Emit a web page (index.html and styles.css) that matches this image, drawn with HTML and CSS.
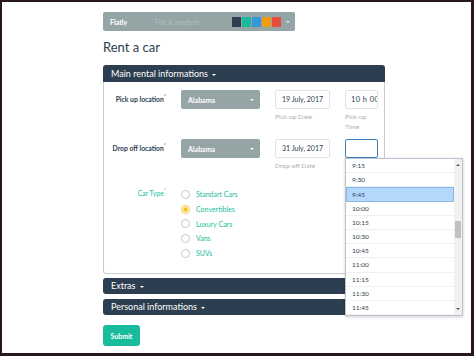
FILE: index.html
```html
<!DOCTYPE html>
<html lang="en">
<head>
    <meta charset="UTF-8">
    <meta name="viewport" content="width=device-width, initial-scale=1.0">
    <title>Rent a car</title>
    <link rel="stylesheet" href="styles.css">
</head>
<body>
    <div class="frame">
        <div class="container">
            <div class="theme-bar">
                <span class="theme-name">Flatly</span>
                <span class="theme-desc">Flat &amp; modern</span>
                <div class="swatches">
                    <span class="swatch sw-navy"></span>
                    <span class="swatch sw-green"></span>
                    <span class="swatch sw-blue"></span>
                    <span class="swatch sw-orange"></span>
                    <span class="swatch sw-red"></span>
                </div>
                <span class="caret caret-light"></span>
            </div>

            <h1 class="page-title">Rent a car</h1>

            <div class="panel">
                <div class="panel-heading">Main rental informations <span class="caret"></span></div>
                <div class="panel-body">
                    <div class="form-row">
                        <label class="row-label">Pick up location<sup>*</sup></label>
                        <div class="select">Alabama <span class="caret"></span></div>
                        <div class="field field-date">
                            <div class="input">19 July, 2017</div>
                            <div class="help">Pick-up Date</div>
                        </div>
                        <div class="field field-time">
                            <div class="input input-time">10 h 00</div>
                            <div class="help">Pick-up<br>Time</div>
                        </div>
                    </div>

                    <div class="form-row">
                        <label class="row-label">Drop off location<sup>*</sup></label>
                        <div class="select">Alabama <span class="caret"></span></div>
                        <div class="field field-date">
                            <div class="input">31 July, 2017</div>
                            <div class="help">Drop-off Date</div>
                        </div>
                        <div class="field field-time">
                            <div class="input input-time focused"></div>
                        </div>
                    </div>

                    <div class="form-row row-radios">
                        <label class="row-label label-green">Car Type<sup>*</sup></label>
                        <div class="radios">
                            <label class="radio"><span class="dot"></span>Standart Cars</label>
                            <label class="radio checked"><span class="dot"></span>Convertibles</label>
                            <label class="radio"><span class="dot"></span>Luxury Cars</label>
                            <label class="radio"><span class="dot"></span>Vans</label>
                            <label class="radio"><span class="dot"></span>SUVs</label>
                        </div>
                    </div>
                </div>
            </div>

            <div class="panel-heading closed">Extras <span class="caret"></span></div>
            <div class="panel-heading closed">Personal informations <span class="caret"></span></div>

            <button class="submit-btn">Submit</button>
        </div>

        <div class="time-list">
            <ul class="time-options">
                <li>9:15</li>
                <li>9:30</li>
                <li class="active">9:45</li>
                <li>10:00</li>
                <li>10:15</li>
                <li>10:30</li>
                <li>10:45</li>
                <li>11:00</li>
                <li>11:15</li>
                <li>11:30</li>
                <li>11:45</li>
            </ul>
            <div class="scrollbar">
                <span class="arrow arrow-up"></span>
                <span class="thumb"></span>
                <span class="arrow arrow-down"></span>
            </div>
        </div>
    </div>
</body>
</html>
```

FILE: styles.css
```css
* {
    box-sizing: border-box;
    margin: 0;
    padding: 0;
}

body {
    font-family: Lato, 'Open Sans', sans-serif;
    color: #2c3e50;
    background: #fff;
}

.frame {
    position: relative;
    width: 474px;
    height: 356px;
    border-style: solid;
    border-color: #2a1719;
    border-width: 2px 3px 3px 2px;
    overflow: hidden;
}

.container {
    width: 282px;
    margin-left: 101px;
    padding-top: 10px;
}

/* theme switcher */
.theme-bar {
    display: flex;
    align-items: center;
    width: 192px;
    height: 19px;
    background: #95a5a6;
    border-radius: 2px;
    padding-left: 7px;
    font-size: 7px;
}

.theme-name {
    color: #fff;
    font-weight: bold;
    width: 45px;
}

.theme-desc {
    color: #b2c0c1;
    width: 77px;
}

.swatches {
    display: flex;
    gap: 1px;
}

.swatch {
    width: 9px;
    height: 10px;
}

.sw-navy { background: #2c3e50; }
.sw-green { background: #18bc9c; }
.sw-blue { background: #3498db; }
.sw-orange { background: #f39c12; }
.sw-red { background: #e74c3c; }

.caret {
    display: inline-block;
    width: 0;
    height: 0;
    border-left: 2px solid transparent;
    border-right: 2px solid transparent;
    border-top: 2px solid #fff;
    vertical-align: middle;
    margin-left: 2px;
}

.caret-light {
    margin-left: 5px;
    border-top-color: #e6ecec;
}

.page-title {
    font-size: 13px;
    font-weight: normal;
    line-height: 16px;
    margin: 8px 0 10px;
}

/* panels */
.panel {
    border: 1px solid #c8cdd1;
    border-radius: 3px;
    margin-bottom: 4px;
}

.panel-heading {
    background: #2c3e50;
    color: #fff;
    font-size: 9px;
    height: 17px;
    line-height: 17px;
    padding-left: 8px;
    border-radius: 3px 3px 0 0;
}

.panel .panel-heading {
    margin: -1px -1px 0;
}

.panel-heading.closed {
    height: 16px;
    line-height: 16px;
    border-radius: 3px;
    margin-bottom: 5px;
}

.panel-body {
    padding: 8px 0 13px;
}

.form-row {
    display: flex;
    align-items: flex-start;
    gap: 15px;
    margin-bottom: 7px;
}

.row-label {
    width: 62px;
    text-align: right;
    font-size: 6.8px;
    font-weight: bold;
    line-height: 19px;
    white-space: nowrap;
}

.row-label sup {
    font-size: 5px;
    font-weight: normal;
    vertical-align: 4px;
    line-height: 0;
}

.label-green {
    color: #18bc9c;
    font-weight: normal;
    line-height: 12px;
}

.select {
    display: flex;
    align-items: center;
    justify-content: space-between;
    width: 79px;
    height: 19px;
    padding: 0 6px 0 7px;
    background: #95a5a6;
    border-radius: 2px;
    color: #fff;
    font-size: 7px;
    font-weight: bold;
}

.field-date {
    width: 55px;
}

.field-time {
    width: 33px;
}

.input {
    height: 19px;
    border: 1px solid #dde3e8;
    border-radius: 2px;
    font-size: 7px;
    line-height: 17px;
    text-align: center;
    white-space: nowrap;
    overflow: hidden;
}

.input-time {
    text-align: left;
    padding-left: 5px;
    font-size: 7.5px;
    letter-spacing: 0.4px;
}

.input-time.focused {
    border-color: #3b82c4;
}

.help {
    margin-top: 3px;
    font-size: 6.5px;
    line-height: 10px;
    color: #a6b0b8;
}

.row-radios {
    margin-top: 16px;
    margin-bottom: 0;
}

.radios {
    display: flex;
    flex-direction: column;
}

.radio {
    display: flex;
    align-items: center;
    gap: 6px;
    height: 14.7px;
    color: #18bc9c;
    font-size: 7px;
}

.dot {
    width: 9px;
    height: 9px;
    border: 1px solid #c2c8cc;
    border-radius: 50%;
    background: #fff;
}

.radio.checked .dot {
    border-color: #f3c125;
    background: radial-gradient(circle, #f3c125 0 2px, #fff 2.5px);
}

.submit-btn {
    display: block;
    margin-top: 10px;
    width: 37px;
    height: 21px;
    border: none;
    border-radius: 3px;
    background: #18bc9c;
    color: #fff;
    font-family: Lato, sans-serif;
    font-size: 7px;
    font-weight: bold;
}

/* open time dropdown */
.time-list {
    position: absolute;
    left: 343px;
    top: 156px;
    width: 118px;
    height: 158px;
    display: flex;
    background: #fff;
    border: 1px solid #b9c4d0;
    box-shadow: 0 1px 3px rgba(0, 0, 0, 0.2);
}

.time-options {
    flex: 1;
    list-style: none;
}

.time-options li {
    height: 14.2px;
    line-height: 14px;
    padding-left: 6px;
    font-size: 6.5px;
    border-bottom: 1px solid #eef0f2;
}

.time-options li.active {
    background: #b3d8fb;
    border: 1px solid #8ab8e6;
    padding-left: 5px;
}

.scrollbar {
    position: relative;
    width: 8px;
    background: #f1f1f1;
}

.thumb {
    position: absolute;
    left: 1px;
    top: 62px;
    width: 6px;
    height: 17px;
    background: #c1c1c1;
}

.arrow {
    position: absolute;
    left: 2px;
    width: 0;
    height: 0;
    border-left: 2px solid transparent;
    border-right: 2px solid transparent;
}

.arrow-up {
    top: 5px;
    border-bottom: 2px solid #555;
}

.arrow-down {
    bottom: 5px;
    border-top: 2px solid #555;
}
```
